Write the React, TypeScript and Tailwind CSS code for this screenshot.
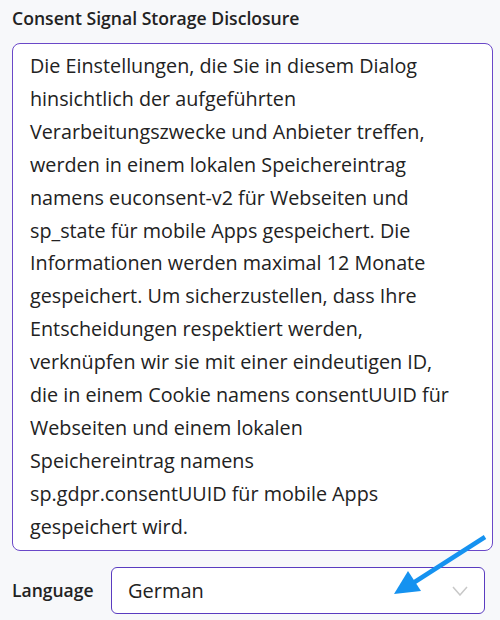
import React from "react";

const lines = [
  "Die Einstellungen, die Sie in diesem Dialog",
  "hinsichtlich der aufgeführten",
  "Verarbeitungszwecke und Anbieter treffen,",
  "werden in einem lokalen Speichereintrag",
  "namens euconsent-v2 für Webseiten und",
  "sp_state für mobile Apps gespeichert. Die",
  "Informationen werden maximal 12 Monate",
  "gespeichert. Um sicherzustellen, dass Ihre",
  "Entscheidungen respektiert werden,",
  "verknüpfen wir sie mit einer eindeutigen ID,",
  "die in einem Cookie namens consentUUID für",
  "Webseiten und einem lokalen",
  "Speichereintrag namens",
  "sp.gdpr.consentUUID für mobile Apps",
  "gespeichert wird.",
];

export default function App() {
  return (
    <div className="relative h-[620px] w-[500px] overflow-hidden bg-[#f7f8fa] pl-3 pr-[7px] font-['Open_Sans',sans-serif] text-[#222]">
      <div className="pt-[7px] text-[17.6px] font-semibold leading-[22px]">
        Consent Signal Storage Disclosure
      </div>
      <div className="mt-[14px] h-[508px] rounded-lg border border-[#6a48c8] bg-white pl-[17px] pt-[6px]">
        {lines.map((l) => (
          <div key={l} className="whitespace-nowrap text-[19.75px] leading-[32.9px]">
            {l}
          </div>
        ))}
      </div>
      <div className="mt-4 flex items-center">
        <span className="w-[99px] text-[17.5px] font-semibold">Language</span>
        <div className="flex h-[47px] w-[374px] items-center justify-between rounded-md border border-[#5a3cc0] bg-white pl-4 pr-4">
          <span className="text-[20px]">German</span>
          <svg width="16" height="10" viewBox="0 0 16 10" fill="none" stroke="#c8c8c8" strokeWidth="1.5">
            <path d="M1 1l7 8 7-8" />
          </svg>
        </div>
      </div>
      <svg className="absolute left-[390px] top-[530px]" width="100" height="70" viewBox="390 530 100 70">
        <line x1="485" y1="537" x2="410" y2="585" stroke="#1592f0" strokeWidth="4.5" strokeLinecap="butt" />
        <polygon points="394,594 408,571 421,591" fill="#1592f0" />
      </svg>
    </div>
  );
}
